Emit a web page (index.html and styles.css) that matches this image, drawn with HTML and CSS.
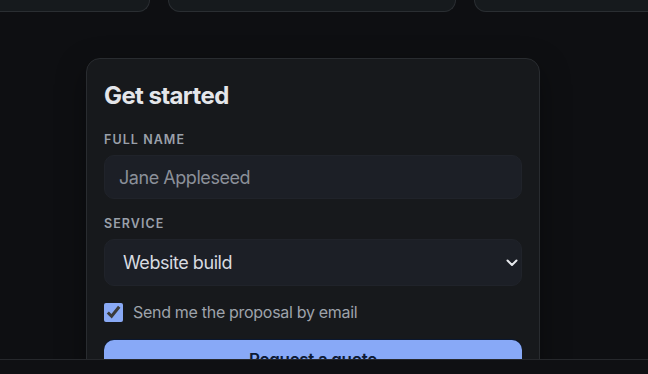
FILE: index.html
```html
<!DOCTYPE html>
<html lang="en">
<head>
<meta charset="utf-8">
<title>Get started</title>
<link rel="stylesheet" href="styles.css">
</head>
<body>
<div class="page">
  <div class="tiles">
    <div class="tile"></div>
    <div class="tile"></div>
    <div class="tile"></div>
  </div>
  <form class="card">
    <h2 class="title">Get started</h2>
    <label class="label" for="name">Full name</label>
    <input class="field" id="name" type="text" placeholder="Jane Appleseed">
    <label class="label" for="service">Service</label>
    <div class="select-wrap">
      <select class="field select" id="service">
        <option>Website build</option>
        <option>Brand identity</option>
        <option>SEO audit</option>
      </select>
      <svg class="chev" width="12" height="8" viewBox="0 0 12 8"><path d="M1.5 1.5 6 6l4.5-4.5" fill="none" stroke="#e6e8ec" stroke-width="2" stroke-linecap="round" stroke-linejoin="round"/></svg>
    </div>
    <label class="check">
      <input type="checkbox" checked>
      <span>Send me the proposal by email</span>
    </label>
    <button class="btn" type="button">Request a quote</button>
  </form>
</div>
<div class="footer"></div>
</body>
</html>
```
FILE: styles.css
```css
html, body {
  margin: 0;
  padding: 0;
  background: #0e0f12;
  font-family: Inter, "Noto Sans", sans-serif;
  overflow: hidden;
  height: 100%;
}
.page {
  width: 902px;
  margin-left: -139px;
  display: flex;
  flex-direction: column;
  align-items: center;
}
.tiles {
  width: 100%;
  display: grid;
  grid-template-columns: repeat(3, 1fr);
  gap: 18px;
}
.tile {
  height: 11px;
  background: #161a1d;
  border: 1px solid #2a2e32;
  border-top: none;
  border-radius: 0 0 12px 12px;
}
.card {
  margin-top: 46px;
  margin-left: 2px;
  width: 454px;
  box-sizing: border-box;
  background: #17191c;
  border: 1px solid #292c30;
  border-radius: 14px;
  padding: 22px 17px 24px;
  display: flex;
  flex-direction: column;
  box-shadow: 0 10px 30px rgba(0,0,0,0.35);
}
.title {
  margin: 0 0 21px;
  font-size: 24px;
  line-height: 30px;
  font-weight: 700;
  letter-spacing: -0.025em;
  color: #e4e6ea;
}
.label {
  font-size: 12.5px;
  line-height: 16px;
  font-weight: 600;
  letter-spacing: 0.085em;
  text-transform: uppercase;
  color: #9aa0aa;
  margin-bottom: 7px;
}
.field {
  box-sizing: border-box;
  width: 100%;
  height: 44px;
  background: #1c1f26;
  border: 1px solid #20232a;
  border-radius: 10px;
  padding: 0 14px;
  font-family: inherit;
  font-size: 18px;
  letter-spacing: -0.025em;
  color: #d8dbe0;
  outline: none;
  margin-bottom: 17px;
}
.field::placeholder {
  color: #8b9099;
}
.select-wrap {
  position: relative;
  margin-bottom: 16px;
}
.select {
  height: 47px;
  margin-bottom: 0;
  padding-left: 18px;
  appearance: none;
  -webkit-appearance: none;
}
.chev {
  position: absolute;
  right: 4px;
  top: 20px;
}
.check {
  display: flex;
  align-items: center;
  gap: 10px;
  font-size: 16px;
  letter-spacing: -0.3px;
  color: #9ea3ab;
  margin-bottom: 18px;
}
.check input {
  margin: 0;
  width: 19px;
  height: 19px;
  accent-color: #89a9f5;
}
.btn {
  height: 40px;
  border: none;
  border-radius: 10px;
  background: #88a9f7;
  color: #0d1a35;
  font-family: inherit;
  font-size: 17px;
  font-weight: 600;
  letter-spacing: -0.02em;
  box-shadow: 0 -1px 0 #0b1830;
}
.footer {
  position: fixed;
  left: 0;
  right: 0;
  bottom: 0;
  height: 14px;
  background: #0f1013;
  border-top: 1px solid #26282c;
}
```
